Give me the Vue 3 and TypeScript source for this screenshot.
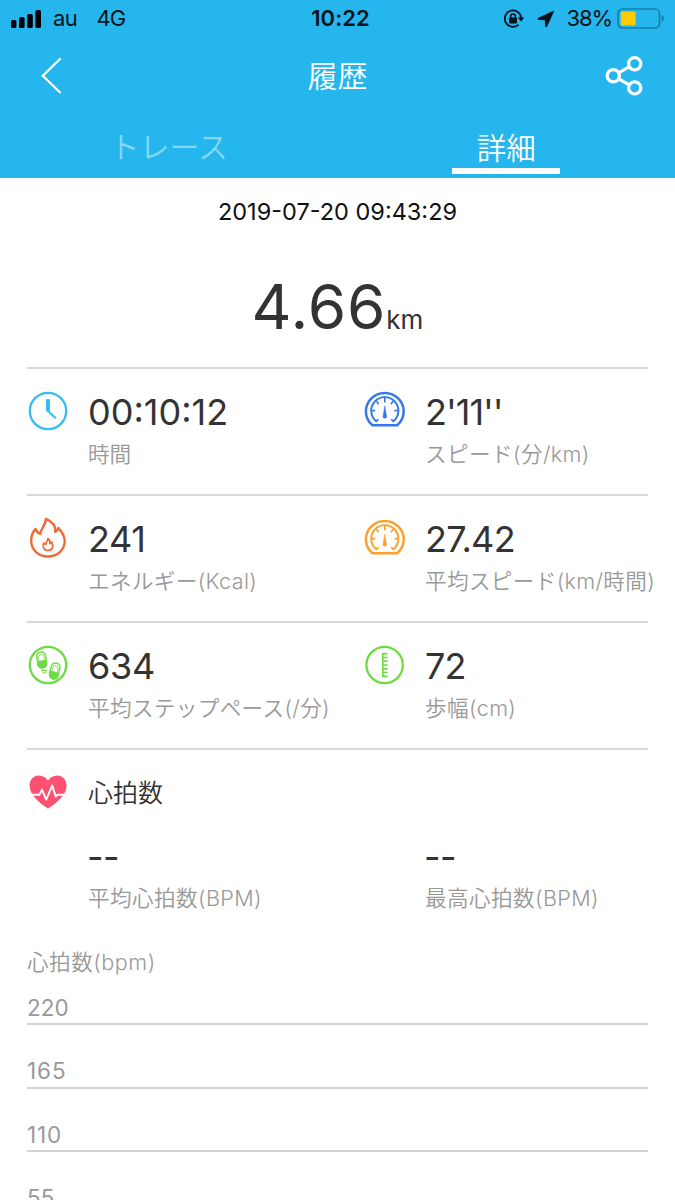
<script setup lang="ts">
interface Metric {
  icon: 'clock' | 'gauge' | 'flame' | 'steps' | 'ruler'
  tone: string
  value: string
  label: string
  key: string
}

const rows: Metric[][] = [
  [
    { key: 'time', icon: 'clock', tone: 'cyan', value: '00:10:12', label: '時間' },
    { key: 'pace', icon: 'gauge', tone: 'blue', value: "2'11''", label: 'スピード(分/km)' },
  ],
  [
    { key: 'energy', icon: 'flame', tone: 'red', value: '241', label: 'エネルギー(Kcal)' },
    { key: 'speed', icon: 'gauge', tone: 'orange', value: '27.42', label: '平均スピード(km/時間)' },
  ],
  [
    { key: 'cadence', icon: 'steps', tone: 'green', value: '634', label: '平均ステップペース(/分)' },
    { key: 'stride', icon: 'ruler', tone: 'green', value: '72', label: '歩幅(cm)' },
  ],
]

const heartStats = [
  { key: 'avg', value: '--', label: '平均心拍数(BPM)' },
  { key: 'max', value: '--', label: '最高心拍数(BPM)' },
]

const ticks = ['220', '165', '110', '55']
</script>

<template>
  <div class="screen">
    <header class="header">
      <div class="status">
        <div class="status-left">
          <svg class="signal" width="32" height="20" viewBox="0 0 32 20">
            <rect x="0" y="11" width="5.4" height="8" rx="1.6" />
            <rect x="8" y="8" width="5.6" height="11" rx="1.6" />
            <rect x="16.2" y="5" width="5.6" height="14" rx="1.6" />
            <rect x="24.4" y="1" width="5.6" height="18" rx="1.6" />
          </svg>
          <span class="carrier">au</span>
          <span class="network">4G</span>
        </div>
        <div class="clock">10:22</div>
        <div class="status-right">
          <svg class="lock" width="22" height="20" viewBox="0 0 22 20">
            <path d="M15.600 15.600A8.200 8.200 0 1 1 18.200 9.600" fill="none" stroke="#06131a" stroke-width="1.800" />
            <path d="M14.800 8.600H21.400L18.100 12.600Z" fill="#06131a" />
            <rect x="6" y="8.600" width="8" height="5.800" rx="0.800" fill="#06131a" />
            <path d="M7.700 9V7.200a2.300 2.300 0 0 1 4.600 0V9" fill="none" stroke="#06131a" stroke-width="1.500" />
          </svg>
          <svg class="arrow" width="18" height="18" viewBox="0 0 18 18">
            <path d="M16.600 1.200L1.200 8.400Q.5 9.300 1.600 9.500L8.300 9.700L8.600 16.400Q8.900 17.400 9.600 16.600Z" fill="#06131a" stroke="#06131a" stroke-width="1" stroke-linejoin="round" />
          </svg>
          <span class="percent">38%</span>
          <svg class="battery" width="48" height="22" viewBox="0 0 48 22">
            <rect x="1" y="1" width="41.5" height="19" rx="4.5" fill="none" stroke="#1680a9" stroke-width="1.7" />
            <rect x="3.8" y="3.6" width="14.8" height="13.8" rx="1.5" fill="#fc0" />
            <path d="M44.6 7.2Q47 8.2 47 10.5T44.6 13.8Z" fill="#1680a9" />
          </svg>
        </div>
      </div>

      <div class="nav">
        <svg class="back" width="24" height="38" viewBox="0 0 24 38">
          <path d="M21.600 1.400L3.800 18.700L21.600 36" fill="none" stroke="#fff" stroke-width="2.200" />
        </svg>
        <h1 class="title">履歴</h1>
        <svg class="share" width="40" height="42" viewBox="0 0 40 42">
          <g fill="none" stroke="#fff" stroke-width="3.2">
            <circle cx="29.7" cy="8.7" r="6.1" />
            <circle cx="8.3" cy="20.8" r="6.1" />
            <circle cx="29.7" cy="32.9" r="6.1" />
            <path d="M13.6 17.8L24.4 11.7M13.6 23.8L24.4 29.9" />
          </g>
        </svg>
      </div>

      <nav class="tabs">
        <div class="tab"><span class="tab-text">トレース</span></div>
        <div class="tab active"><span class="tab-text">詳細</span></div>
      </nav>
    </header>

    <main class="body">
      <div class="date">2019-07-20 09:43:29</div>
      <div class="distance"><span class="amount">4.66</span><span class="unit">km</span></div>

      <section v-for="(row, i) in rows" :key="i" class="row">
        <div v-for="m in row" :key="m.key" class="metric">
          <svg class="icon" :class="m.tone" width="40" height="42" viewBox="0 0 40 42" fill="none" stroke="currentColor">
            <g v-if="m.icon === 'clock'">
              <circle cx="20" cy="20" r="18.2" stroke-width="2.3" />
              <path d="M20 8.2V20" stroke-width="4" />
              <path d="M19.200 19.400L28 27.200" stroke-width="2" />
            </g>
            <g v-else-if="m.icon === 'gauge'">
              <path d="M7.400 34.200A18.900 18.400 0 1 1 32.200 34.200Z" stroke-width="2.500" stroke-linejoin="round" />
              <path d="M13.400 28.400L11.200 30.300A13.600 13.600 0 1 1 28.400 30.300L26.200 28.400" stroke-width="1.900" />
              <path d="M19.800 7v4.400M11.600 10.200l2 3M28 10.200l-2 3M6.600 19.600h3.600M33 19.600h-3.600" stroke-width="1.600" />
              <path d="M19.800 15L17.900 26.200Q19.800 28.400 21.700 26.200Z" fill="currentColor" stroke-width=".5" />
            </g>
            <g v-else-if="m.icon === 'flame'">
              <path d="M17.900 0.900C25.300 3.900 27.900 8.700 27.300 13.900C29.100 13.100 29.900 11.700 30.300 9.900C34.300 14.300 36.700 18.500 36.700 22.700C36.700 31.900 29.300 38.500 19.900 38.500C10.500 38.500 3.200 31.900 3.200 22.700C3.200 18.300 4.700 14.100 7.500 10.900C8.200 13.300 10 15.100 12.400 15.900C12.200 11.500 17.700 7.500 17.900 0.900Z" stroke-width="2.400" stroke-linejoin="round" />
              <path d="M19.900 20.600C21.900 21.800 22.300 23.800 22 25.600C22.900 25.300 23.400 24.600 23.700 24.100C26.100 28.200 24.300 32.500 19.900 32.500C15.500 32.500 13.900 28.100 15.900 25C16.500 26 17.200 26.300 18 26.400C17.500 24.300 19.800 23.300 19.900 20.600Z" stroke-width="1.700" stroke-linejoin="round" />
            </g>
            <g v-else-if="m.icon === 'steps'">
              <circle cx="20" cy="20" r="18.200" stroke-width="2.300" />
              <g transform="rotate(-8 13.500 15)">
                <rect x="9.300" y="7" width="8.800" height="16" rx="4.400" stroke-width="1.500" />
                <path d="M9.300 16h8.800v2.600a4.400 4.400 0 0 1-8.800 0Z" fill="currentColor" stroke-width="1" />
                <path d="M11 15.200v-3a2.700 2.700 0 0 1 5.400 0v3" stroke-width=".8" />
              </g>
              <g transform="rotate(14 26.700 26)">
                <rect x="22.300" y="18" width="8.800" height="16" rx="4.400" stroke-width="1.500" />
                <path d="M22.300 27.200h8.800v2.400a4.400 4.400 0 0 1-8.800 0Z" fill="currentColor" stroke-width="1" />
                <path d="M24 26.200v-3a2.700 2.700 0 0 1 5.400 0v3" stroke-width=".8" />
              </g>
              <path d="M13 25.500h6.200M14.400 27.900h4" stroke-width="1" />
            </g>
            <g v-else>
              <circle cx="19.600" cy="20" r="18.200" stroke-width="2.300" />
              <path d="M17.800 8V32M17 8.700h5.600M18 12.500h4.600M18 16.200h4.600M18 20h4.600M18 23.800h4.600M18 27.500h4.600M17 31.300h5.600" stroke-width="1.700" />
            </g>
          </svg>
          <div class="text">
            <div class="value" :class="m.key">{{ m.value }}</div>
            <div class="label" :class="m.key">{{ m.label }}</div>
          </div>
        </div>
      </section>

      <section class="heart">
        <div class="heart-head">
          <svg class="heart-icon" width="40" height="36" viewBox="0 0 40 36">
            <path d="M20 34.6C12 29 1.6 21.5 1.6 11.4C1.6 5.6 5.6 1.4 10.8 1.4C15 1.4 18.3 3.5 20 6.8C21.700 3.500 25 1.400 29.200 1.400C34.400 1.400 38.600 5.600 38.600 11.400C38.600 21.500 28 29 20 34.600Z" fill="#fc5170" />
            <path d="M1 20.800H11.400L14 15.600L18.200 25.600L24.200 11.600L27.800 22.600L29.200 20.800H39" fill="none" stroke="#fff" stroke-width="1.900" stroke-linejoin="round" />
          </svg>
          <h2 class="heart-title">心拍数</h2>
        </div>
        <div class="heart-stats">
          <div v-for="s in heartStats" :key="s.key" class="stat">
            <div class="value dashes">{{ s.value }}</div>
            <div class="label bpm">{{ s.label }}</div>
          </div>
        </div>
      </section>

      <section class="chart">
        <div class="axis-title">心拍数(bpm)</div>
        <div v-for="t in ticks" :key="t" class="tick" :class="'t' + t">{{ t }}</div>
      </section>
    </main>
  </div>
</template>

<style>
html,
body {
  margin: 0;
  background: #fff;
}
</style>

<style scoped>
.screen {
  width: 675px;
  height: 1200px;
  overflow: hidden;
  background: #fff;
  color: #333;
  font-family: Inter, "Noto Sans CJK JP", sans-serif;
  font-weight: 400;
  white-space: nowrap;
}
.header {
  height: 178px;
  background: #25b6ed;
  color: #fff;
}
.status {
  display: grid;
  grid-template-columns: 1fr auto 1fr;
  height: 37px;
  padding: 0 10px 0 11px;
  color: #06131a;
  font-size: 22px;
  line-height: 37px;
}
.status-left,
.status-right {
  display: flex;
  align-items: center;
}
.status-right {
  justify-content: flex-end;
}
.carrier {
  margin-left: 10px;
  letter-spacing: -0.5px;
}
.network {
  margin-left: 19px;
  letter-spacing: -0.8px;
}
.clock {
  margin-left: 5px;
  font-weight: 600;
  letter-spacing: 0.1px;
}
.arrow {
  margin-left: 12px;
}
.percent {
  margin-left: 11px;
  letter-spacing: -1.1px;
}
.battery {
  margin-left: 5px;
}
.nav {
  display: grid;
  grid-template-columns: 1fr auto 1fr;
  align-items: center;
  height: 78px;
  padding: 0 30px 0 39px;
}
.title {
  margin: 0 0 0 -9px;
  font-size: 30px;
  font-weight: 350;
  line-height: 40px;
}
.share {
  justify-self: end;
}
.tabs {
  display: grid;
  grid-template-columns: 1fr 1fr;
  height: 63px;
}
.tab {
  display: flex;
  justify-content: center;
}
.tab-text {
  height: 55px;
  width: 120px;
  font-size: 30px;
  font-weight: 350;
  line-height: 65px;
  text-align: center;
  color: #86d6f5;
}
.active .tab-text {
  width: 108px;
  height: 53px;
  font-size: 29.5px;
  line-height: 66px;
  color: #fff;
  border-bottom: 6px solid #fff;
}
.body {
  padding: 0 27px;
}
.date {
  height: 66px;
  font-size: 23.5px;
  line-height: 67px;
  color: #111;
  text-align: center;
}
.distance {
  height: 123px;
  display: flex;
  justify-content: center;
  align-items: baseline;
}
.amount {
  font-size: 62px;
  line-height: 126px;
  letter-spacing: 0.9px;
}
.unit {
  font-size: 26px;
}
.row {
  box-sizing: border-box;
  height: 127px;
  display: grid;
  grid-template-columns: 337px 1fr;
  border-top: 2px solid #d9d9d9;
}
.metric {
  display: flex;
  gap: 20px;
  padding: 22px 0 0 1px;
}
.icon {
  flex: none;
  overflow: visible;
}
.cyan { color: #35bdf2; }
.blue { color: #3478ec; }
.red { color: #f26a35; }
.orange { color: #fb9f2f; }
.green { color: #6ddc43; }
.orange {
  margin-top: 1px;
}
.value {
  margin-top: -1px;
  font-size: 36px;
  line-height: 44px;
}
.value.energy,
.value.cadence {
  letter-spacing: -0.3px;
}
.value.pace {
  letter-spacing: -1px;
}
.value.speed {
  letter-spacing: -0.7px;
}
.value.stride {
  letter-spacing: -0.8px;
}
.label {
  font-size: 21.600px;
  font-weight: 350;
  line-height: 30px;
  margin-top: 5px;
  color: #999;
}
.label.pace,
.label.bpm {
  letter-spacing: 0.4px;
}
.label.energy,
.label.speed,
.label.cadence,
.label.stride {
  letter-spacing: 0.35px;
}
.heart {
  box-sizing: border-box;
  height: 191px;
  border-top: 2px solid #d9d9d9;
}
.heart-head {
  display: flex;
  gap: 20px;
  padding: 24px 0 0 1px;
}
.heart-title {
  margin: 0;
  font-size: 25px;
  font-weight: 350;
  line-height: 39px;
}
.heart-stats {
  display: grid;
  grid-template-columns: 337px 1fr;
  padding: 23px 0 0 61px;
}
.stat .label {
  margin-top: 4px;
}
.dashes {
  margin-left: -1px;
  font-feature-settings: "calt" 0;
  letter-spacing: -0.6px;
}
.axis-title,
.tick {
  font-size: 22.500px;
  color: #999;
}
.axis-title {
  height: 46px;
  font-size: 21.600px;
  font-weight: 350;
  line-height: 46px;
  letter-spacing: 0.5px;
}
.tick {
  box-sizing: border-box;
  height: 63.500px;
  padding-top: 30px;
  line-height: 32px;
  border-bottom: 2px solid #d3d3d3;
}
.t165,
.t110 {
  letter-spacing: 0.9px;
}
.tick:nth-child(2) {
  height: 40px;
  padding-top: 7px;
}
</style>
